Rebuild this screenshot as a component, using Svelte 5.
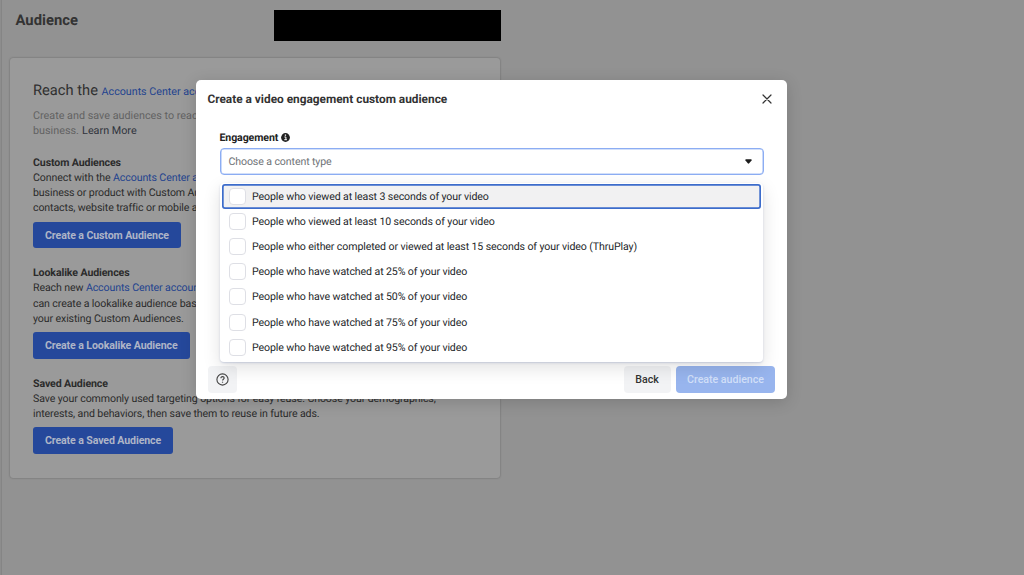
<script>
  const sections = [
    {
      title: 'Custom Audiences',
      lines: [
        ['Connect with the ', 'Accounts Center accounts'],
        ['business or product with Custom Audiences'],
        ['contacts, website traffic or mobile app']
      ],
      action: 'Create a Custom Audience',
      width: 148
    },
    {
      title: 'Lookalike Audiences',
      lines: [
        ['Reach new ', 'Accounts Center accounts'],
        ['can create a lookalike audience based'],
        ['your existing Custom Audiences.']
      ],
      action: 'Create a Lookalike Audience',
      width: 156.5
    },
    {
      title: 'Saved Audience',
      lines: [
        ['Save your commonly used targeting options for easy reuse. Choose your demographics,'],
        ['interests, and behaviors, then save them to reuse in future ads.']
      ],
      action: 'Create a Saved Audience',
      width: 140
    }
  ];
  const options = [
    'People who viewed at least 3 seconds of your video',
    'People who viewed at least 10 seconds of your video',
    'People who either completed or viewed at least 15 seconds of your video (ThruPlay)',
    'People who have watched at 25% of your video',
    'People who have watched at 50% of your video',
    'People who have watched at 75% of your video',
    'People who have watched at 95% of your video'
  ];
  let active = $state(0);
</script>

<div class="page">
  <header>
    <h1>Audience</h1>
    <div class="redacted"></div>
  </header>
  <main>
    <h2>Reach the <a>Accounts Center accounts</a></h2>
    <p class="intro">Create and save audiences to reach<br />business. <span>Learn More</span></p>
    {#each sections as s}
      <section>
        <h3>{s.title}</h3>
        {#each s.lines as line}
          <p>{line[0]}{#if line[1]}<a>{line[1]}</a>{/if}</p>
        {/each}
        <button class="primary" style="width:{s.width}px">{s.action}</button>
      </section>
    {/each}
  </main>

  <div class="modal" role="dialog">
    <div class="modal-head">
      <h4>Create a video engagement custom audience</h4>
      <svg width="10" height="10" viewBox="0 0 10 10"><path d="M1 1l8 8M9 1L1 9" stroke="#333" stroke-width="1.2" stroke-linecap="round" /></svg>
    </div>
    <div class="field">
      <div class="label">
        Engagement
        <svg width="9" height="9" viewBox="0 0 9 9"><circle cx="4.5" cy="4.5" r="4.4" fill="#222" /><path d="M3.4 4h1.5v2.6M3.3 6.7h2.6" stroke="#fff" stroke-width="1" fill="none" /><rect x="3.8" y="1.5" width="1.3" height="1.3" fill="#fff" /></svg>
      </div>
      <div class="select">
        <span>Choose a content type</span>
        <svg width="7" height="5" viewBox="0 0 8 5" preserveAspectRatio="none"><path d="M1 .3h6q1 .2.5 1.1L4.8 4.3q-.8.7-1.6 0L.5 1.4Q0 .5 1 .3z" fill="#1c1c1c" /></svg>
      </div>
      <div class="menu">
        {#each options as o, i}
          <div class="option" class:active={i === active}><i></i><span>{o}</span></div>
        {/each}
      </div>
    </div>
    <footer>
      <button class="help" aria-label="Help">
        <svg width="13" height="13" viewBox="0 0 13 13" fill="none" stroke="#444" stroke-width="1.1"><circle cx="6.5" cy="6.5" r="5.6" /><path d="M4.9 5.2c0-2.2 3.3-2 3.3-.1 0 1.2-1.6 1.2-1.6 2.4" /><circle cx="6.6" cy="9.2" r=".35" fill="#444" stroke-width=".6" /></svg>
      </button>
      <button class="back">Back</button>
      <button class="create">Create audience</button>
    </footer>
  </div>
</div>

<style>
  * { box-sizing: border-box; }
  h1, h2, h3, h4, p { margin: 0; white-space: nowrap; }
  button { font: inherit; border: 0; padding: 0; letter-spacing: inherit; }
  .page {
    position: relative;
    width: 1024px;
    height: 575px;
    overflow: hidden;
    background: #929292;
    box-shadow: inset 1px 0 #8d8d8d, inset 2px 0 #858585;
    font: 10.6px/15px Roboto, sans-serif;
    letter-spacing: -.11px;
    text-rendering: geometricPrecision;
    color: #2b2b2b;
  }
  header { display: flex; justify-content: space-between; width: 500.5px; height: 58px; padding: 10px 0 0 15.5px; }
  h1 { font-size: 14.8px; line-height: 21px; font-weight: 700; letter-spacing: 0; color: #333; }
  .redacted { width: 226.5px; height: 31px; background: #000; }
  main {
    width: 490px;
    height: 419.5px;
    margin-left: 10px;
    padding: 23px 23px 0;
    background: #9a9a9a;
    border-radius: 3px;
    box-shadow: 0 0 2px rgba(0, 0, 0, .35);
    overflow: hidden;
  }
  h2 { height: 18px; font-size: 14.7px; line-height: 18px; font-weight: 400; letter-spacing: 0; color: #303030; }
  h2 a { font-size: 10.7px; }
  a { color: #1f438f; }
  .intro { margin-top: 9px; height: 30.5px; line-height: 15.2px; font-size: 10.8px; letter-spacing: 0; color: #626262; }
  .intro span { color: #30343c; margin-left: .5px; }
  section { margin-top: 16.6px; }
  section + section { margin-top: 17px; }
  h3 { font-size: 10.6px; line-height: 15px; font-weight: 700; }
  section p { height: 15.2px; line-height: 15.2px; }
  .primary { display: block; height: 26.6px; margin-top: 6.2px; border-radius: 3px; background: #25489b; color: #aeb5c7; font-weight: 700; }
  .modal {
    position: absolute;
    left: 196px;
    top: 80px;
    width: 591px;
    height: 319px;
    display: flex;
    flex-direction: column;
    border-radius: 5px;
    background: #fff;
    box-shadow: 0 3px 16px rgba(0, 0, 0, .16);
  }
  .modal-head { display: flex; justify-content: space-between; align-items: center; height: 38px; padding: 0 15.5px 0 11.5px; }
  h4 { font-size: 11.85px; letter-spacing: 0; font-weight: 700; color: #333; }
  .field { position: relative; padding: 12px 23.5px 0; }
  .label { display: flex; align-items: center; gap: 3px; height: 15px; font-weight: 700; color: #222; }
  .select { display: flex; align-items: center; justify-content: space-between; height: 26.5px; margin-top: 3px; padding: 0 10.5px 0 8px; border: 1.5px solid #8cadf3; box-shadow: inset 0 0 0 .6px #a8c1f5; border-radius: 4px; color: #6f7377; }
  .menu {
    position: absolute;
    left: 23.5px;
    top: 65px;
    width: 543.5px;
    height: 179px;
    padding: 1px 2px;
    border-radius: 4px;
    background: #fff;
    box-shadow: 0 1px 2px rgba(60, 80, 150, .22), 0 6px 18px rgba(0, 0, 0, .12);
  }
  .option { display: flex; align-items: center; height: 25.1px; padding-left: 7px; border-radius: 3px; color: #24272a; }
  .option i { width: 17px; height: 17px; margin-right: 6.5px; border: 1px solid #dedfe5; border-radius: 4px; background: #fff; }
  .option span { white-space: nowrap; }
  .active { background: #f1f1f2; box-shadow: inset 0 0 0 1.7px #3c6ccb; }
  footer { display: flex; margin-top: auto; height: 33px; padding: 0 12px; }
  footer button { height: 27px; border-radius: 4px; background: rgba(233, 235, 238, .6); }
  .help { display: flex; align-items: center; justify-content: center; width: 29px; }
  .back { width: 47px; margin-left: auto; margin-right: 5.5px; color: #333; font-weight: 500; letter-spacing: 0; }
  footer .create { width: 99px; background: #98b5ee; color: #d3e0f9; font-weight: 500; letter-spacing: 0; }
</style>
